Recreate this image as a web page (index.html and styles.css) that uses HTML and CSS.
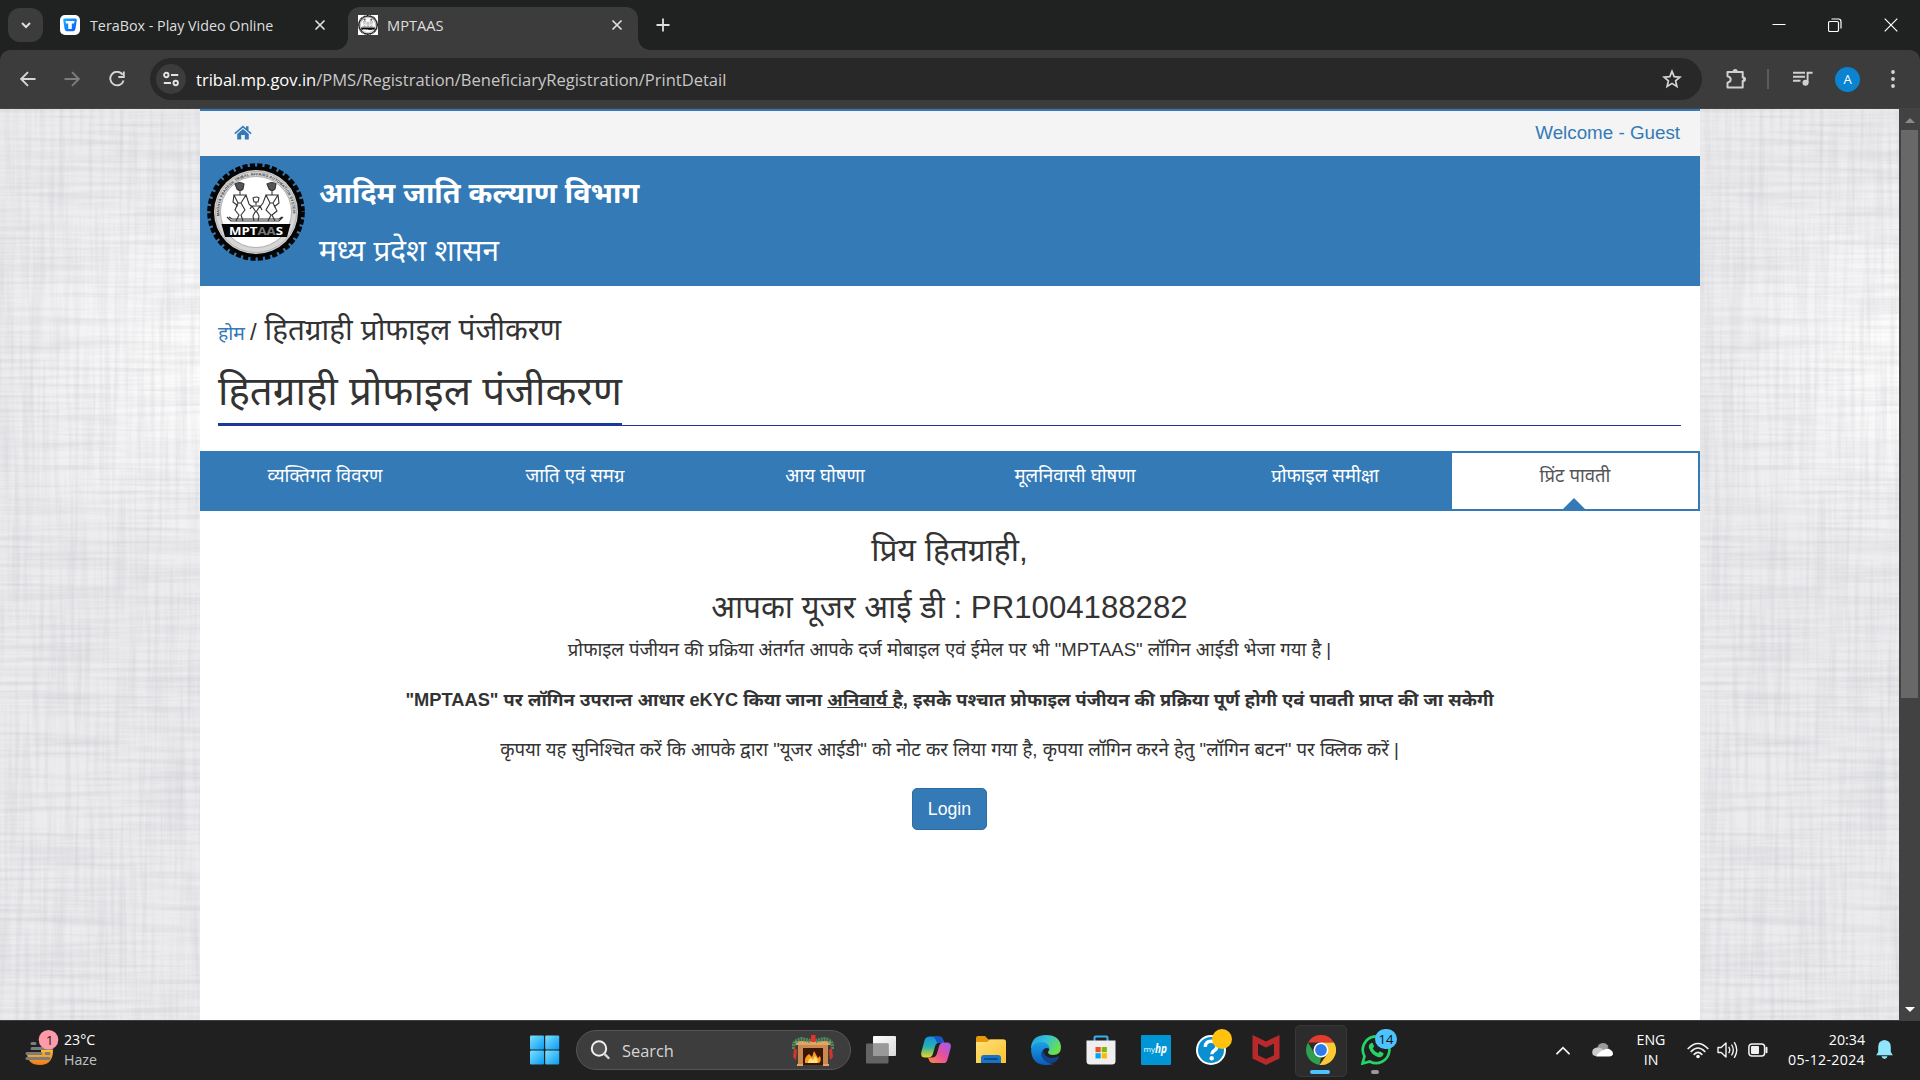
FILE: index.html
```html
<!DOCTYPE html>
<html lang="hi">
<head>
<meta charset="utf-8">
<title>MPTAAS</title>
<link rel="stylesheet" href="styles.css">
</head>
<body>
<svg class="defs" width="0" height="0" aria-hidden="true">
  <defs>
    <filter id="warp" x="0" y="0" width="100%" height="100%">
      <feTurbulence type="fractalNoise" baseFrequency="0.008 0.22" numOctaves="3" seed="4"/>
      <feColorMatrix values="0 0 0 0 .45  0 0 0 0 .46  0 0 0 0 .48  .55 0 0 0 -.21"/>
    </filter>
    <filter id="weft" x="0" y="0" width="100%" height="100%">
      <feTurbulence type="fractalNoise" baseFrequency="0.2 0.008" numOctaves="3" seed="9"/>
      <feColorMatrix values="0 0 0 0 .45  0 0 0 0 .46  0 0 0 0 .48  .5 0 0 0 -.2"/>
    </filter>
    <radialGradient id="glow" gradientUnits="userSpaceOnUse" cx="215" cy="250" r="230">
      <stop offset="0" stop-color="#fff"/><stop offset="1" stop-color="#fff" stop-opacity="0"/>
    </radialGradient>
    <g id="linen">
      <rect width="200" height="911" fill="#ececef"/>
      <rect width="200" height="911" fill="url(#glow)"/>
      <rect width="200" height="911" filter="url(#warp)"/>
      <rect width="200" height="911" filter="url(#weft)"/>
    </g>
    <symbol id="seal" viewBox="0 0 98 98">
      <circle cx="49" cy="49" r="45.500" fill="#050505"/>
      <circle cx="49" cy="49" r="46.300" fill="none" stroke="#050505" stroke-width="5" stroke-dasharray="5.2 2.1"/>
      <circle cx="49" cy="49" r="42" fill="#d6d6d6"/>
      <circle cx="49" cy="49" r="40.600" fill="none" stroke="#999" stroke-width=".6"/>
      <circle cx="49" cy="49" r="35.500" fill="#fff" stroke="#888" stroke-width=".6"/>
      <path id="ring" d="M12.500 53A36.700 36.700 0 1 1 85.500 53" fill="none"/>
      <text font-family="Liberation Sans" font-size="3.800" font-weight="700" fill="#444"><textPath href="#ring" textLength="120">MADHYA PRADESH TRIBAL AFFAIRS AUTOMATION SYSTEM</textPath></text>
      <g fill="none" stroke="#333" stroke-width="1.100">
        <path d="M28 21q5-3 9 0l-1 5q-3 3-6 0z" fill="#555"/><path d="M33 28v4M27 32h12l-5 8h-3zM27 32l-1 7 5 4M39 32l3 9 3 3M31 40l-3 7 4 5-3 6M34 40l4 7-4 5 2 6"/>
        <path d="M60 21q5-3 9 0l-1 5q-3 3-6 0z" fill="#555"/><path d="M65 28v4M59 32h12l-5 8h-3zM59 32l-3 8-3 4M71 32l1 8-5 4M63 40l-4 7 5 5-3 6M66 40l4 8-5 4 3 6"/>
        <path d="M46 35q4-2 6 0l-1 4h-4zM49 39v3M45 43h8l-4 6zM45 43l-2 3M53 43l2 4M48 49l-2 4 1 5M50 49l2 4-1 5"/>
        <path d="M20 54l4 4h48l4-4M22 54l3 2h47l3-2"/>
      </g>
      <path d="M14.500 61h69l-3.500 13h-62z" fill="#050505"/>
      <text x="22" y="72" font-family="Open Sans" font-weight="700" font-size="11" fill="#fff" textLength="54" lengthAdjust="spacingAndGlyphs">MPT<tspan fill="#777">AA</tspan>S</text>
    </symbol>
    <linearGradient id="win" x1="0" y1="0" x2="1" y2="1"><stop stop-color="#7be0fc"/><stop offset="1" stop-color="#0a9bf5"/></linearGradient>
    <linearGradient id="cpA" x1="0" y1="0" x2="0" y2="1"><stop stop-color="#1690e8"/><stop offset=".5" stop-color="#27b3a8"/><stop offset="1" stop-color="#f2d322"/></linearGradient>
    <linearGradient id="cpB" x1="1" y1="0" x2="0" y2="1"><stop stop-color="#9b5cf0"/><stop offset=".5" stop-color="#e8509b"/><stop offset="1" stop-color="#ff8a3c"/></linearGradient>
    <linearGradient id="fold" x1="0" y1="0" x2="1" y2="1"><stop stop-color="#ffe07a"/><stop offset="1" stop-color="#fbc22d"/></linearGradient>
    <linearGradient id="edgeA" x1="0" y1="0" x2="1" y2=".5"><stop stop-color="#1f9de0"/><stop offset=".5" stop-color="#35c1d5"/><stop offset="1" stop-color="#6be04d"/></linearGradient>
    <linearGradient id="edgeB" x1="0" y1="0" x2="0" y2="1"><stop stop-color="#1aa1e8"/><stop offset="1" stop-color="#0a5cb8"/></linearGradient>
    <linearGradient id="sun" x1="0" y1="0" x2="0" y2="1"><stop stop-color="#fbbd2c"/><stop offset="1" stop-color="#f07a1c"/></linearGradient>
    <linearGradient id="tv" x1="0" y1="0" x2="1" y2="1"><stop stop-color="#fff"/><stop offset="1" stop-color="#d8d8d8"/></linearGradient>
    <linearGradient id="tera" x1="0" y1="0" x2="1" y2="1"><stop stop-color="#18b4ff"/><stop offset="1" stop-color="#0a55ff"/></linearGradient>
  </defs>
</svg>

<div class="screen">
  <header class="tabstrip">
    <button class="tab-search"><svg width="12" height="12" viewBox="0 0 12 12"><path d="M2 4l4 4 4-4" fill="none" stroke="#dedede" stroke-width="2"/></svg></button>
    <div class="tab">
      <svg width="20" height="20" viewBox="0 0 20 20"><rect width="20" height="20" rx="5" fill="#fff"/><path d="M4.500 3.500h11q1.500 0 1.300 1.500l-1.400 9q-.2 2-2.200 2.200H6.800q-2-.2-2.200-2.200L3.200 5q-.2-1.500 1.300-1.500z" fill="url(#tera)"/><path d="M5.500 6h9l-.5 2.500h-2.200V14H8.200V8.500H6z" fill="#fff"/></svg>
      <span class="tab-title t">TeraBox - Play Video Online</span>
      <svg class="x" width="12" height="12" viewBox="0 0 12 12"><path d="M1.500 1.500l9 9M10.500 1.500l-9 9"/></svg>
    </div>
    <div class="tab active">
      <svg width="20" height="20" viewBox="0 0 98 98"><rect width="98" height="98" fill="#fff"/><use href="#seal" width="98" height="98"/></svg>
      <span class="tab-title t">MPTAAS</span>
      <svg class="x" width="12" height="12" viewBox="0 0 12 12"><path d="M1.500 1.500l9 9M10.500 1.500l-9 9"/></svg>
    </div>
    <svg class="plus" width="14" height="14" viewBox="0 0 14 14"><path d="M7 .5v13M.5 7h13" stroke="#dedede" stroke-width="1.800"/></svg>
    <div class="win-controls">
      <svg width="14" height="14" viewBox="0 0 14 14"><path d="M.5 6.500h13" stroke="#fff" stroke-width="1"/></svg>
      <svg width="14" height="14" viewBox="0 0 14 14"><rect x=".5" y="3.500" width="10" height="10" rx="1.500" fill="none" stroke="#fff" stroke-width="1.200"/><path d="M3.500 1h7q2.500 0 2.500 2.500v7" fill="none" stroke="#fff" stroke-width="1.200"/></svg>
      <svg width="14" height="14" viewBox="0 0 14 14"><path d="M.7.7l12.600 12.600M13.300.7L.7 13.300" stroke="#fff" stroke-width="1.200"/></svg>
    </div>
  </header>

  <div class="toolbar-back">
  <div class="toolbar">
    <svg class="nav-ic" width="16" height="16" viewBox="0 0 16 16"><path d="M15.500 8H1.500M8 1.200L1.200 8 8 14.800" fill="none" stroke="#d5d5d5" stroke-width="1.900"/></svg>
    <svg class="nav-ic" width="16" height="16" viewBox="0 0 16 16"><path d="M.5 8h14M8 1.200L14.800 8 8 14.800" fill="none" stroke="#7d7d7d" stroke-width="1.900"/></svg>
    <svg class="nav-ic reload" width="16" height="16" viewBox="0 0 16 16"><path d="M13.600 3.600A6.800 6.800 0 1 0 14.600 9.500M14.800.5v5.500H9.300" fill="none" stroke="#d5d5d5" stroke-width="1.900"/></svg>
    <div class="omnibox">
      <span class="site"><svg width="16" height="16" viewBox="0 0 16 16"><g fill="none" stroke="#e3e3e3" stroke-width="1.900"><circle cx="3.300" cy="4" r="2.200"/><path d="M8 4h7.200M.8 12H8"/><circle cx="12.700" cy="12" r="2.200"/></g></svg></span>
      <span class="t url"><b>tribal.mp.gov.in</b>/PMS/Registration/BeneficiaryRegistration/PrintDetail</span>
      <svg class="star" width="20" height="20" viewBox="0 0 20 20"><path d="M10 2.300l2.200 5.300 5.700.5-4.300 3.700 1.300 5.600-4.900-3-4.900 3 1.300-5.600L2.100 8.100l5.700-.5z" fill="none" stroke="#d5d5d5" stroke-width="1.700"/></svg>
    </div>
    <svg class="puzzle" width="22" height="22" viewBox="0 0 22 22"><path d="M2.500 4h15.200v5.500q1.800.2 1.800 1.800t-1.800 1.700v6.500H2.500v-4.800q3.200-.8 3.200-3.200T2.500 8.300z" fill="none" stroke="#d0d0d0" stroke-width="2" stroke-linejoin="round"/><path d="M7.500 4q.2-3 2.700-3t2.700 3zM18 8.500q3 .2 3 2.800t-3 2.700z" fill="#d0d0d0"/></svg>
    <i class="divider"></i>
    <svg class="music" width="20" height="16" viewBox="0 0 20 16"><path d="M0 1.800h12M0 5.800h12M0 9.800h7.500" stroke="#d0d0d0" stroke-width="1.900"/><circle cx="12.500" cy="11.800" r="3" fill="#d0d0d0"/><path d="M14.600 12V1.800h5" fill="none" stroke="#d0d0d0" stroke-width="1.900"/></svg>
    <span class="avatar">A</span>
    <svg class="dots" width="4" height="18" viewBox="0 0 4 18"><g fill="#d5d5d5"><circle cx="2" cy="2" r="1.900"/><circle cx="2" cy="9" r="1.900"/><circle cx="2" cy="16" r="1.900"/></g></svg>
  </div>
  </div>

  <div class="viewport">
    <svg class="gutter" width="200" height="911"><use href="#linen"/></svg>
    <main class="page">
      <div class="topbar">
        <svg width="18" height="15" viewBox="0 0 18 15"><path d="M9 .5l3 2.700V1.200h2.500v4.200L17.700 8l-1 1.200L9 2.700 1.300 9.200.3 8z" fill="#337ab7"/><path d="M9 4l5.800 4.900v5.600h-4V10H7.200v4.500h-4V8.900z" fill="#337ab7"/></svg>
        <span class="t">Welcome - Guest</span>
      </div>
      <div class="banner">
        <svg width="98" height="98"><use href="#seal" width="98" height="98"/></svg>
        <div class="names">
          <div class="dept t">आदिम जाति कल्याण विभाग</div>
          <div class="govt t">मध्य प्रदेश शासन</div>
        </div>
      </div>
      <div class="crumbs t"><span class="home">होम</span><span class="slash">/</span><span>हितग्राही प्रोफाइल पंजीकरण</span></div>
      <div class="title"><h1 class="t">हितग्राही प्रोफाइल पंजीकरण</h1></div>
      <nav class="steps">
        <div>व्यक्तिगत विवरण</div>
        <div>जाति एवं समग्र</div>
        <div>आय घोषणा</div>
        <div>मूलनिवासी घोषणा</div>
        <div>प्रोफाइल समीक्षा</div>
        <div class="current">प्रिंट पावती</div>
      </nav>
      <section class="message">
        <div class="dear">प्रिय हितग्राही,</div>
        <div class="uid">आपका यूजर आई डी : PR1004188282</div>
        <div class="p1">प्रोफाइल पंजीयन की प्रक्रिया अंतर्गत आपके दर्ज मोबाइल एवं ईमेल पर भी "MPTAAS" लॉगिन आईडी भेजा गया है |</div>
        <div class="p2">"MPTAAS" पर लॉगिन उपरान्त आधार eKYC किया जाना <u>अनिवार्य है</u>, इसके पश्चात प्रोफाइल पंजीयन की प्रक्रिया पूर्ण होगी एवं पावती प्राप्त की जा सकेगी</div>
        <div class="p3">कृपया यह सुनिश्चित करें कि आपके द्वारा "यूजर आईडी" को नोट कर लिया गया है, कृपया लॉगिन करने हेतु "लॉगिन बटन" पर क्लिक करें |</div>
        <button class="login">Login</button>
      </section>
    </main>
    <svg class="gutter" width="199" height="911"><use href="#linen"/></svg>
    <div class="scrollbar"><i class="up"></i><i class="thumb"></i><i class="down"></i></div>
  </div>

  <footer class="taskbar">
    <div class="weather">
      <svg width="34" height="38" viewBox="0 0 34 38"><path d="M2 22h14v-2h12q0 15-13 15T2 22z" fill="url(#sun)"/><g stroke="#7a7d80" stroke-width="3" stroke-linecap="round"><path d="M7 13.500h3M7 18.500h20M2 23.500h14M21 23.500h3M2 28.500h22"/></g><circle cx="23.500" cy="9.800" r="9.800" fill="#ff9aa8"/><text x="24.500" y="14.800" text-anchor="middle" font-family="Open Sans" font-size="13.500" fill="#1b1b1b">1</text></svg>
      <div class="temps"><span>23°C</span><span class="dim">Haze</span></div>
    </div>
    <div class="apps">
      <div class="slot"><svg width="30" height="30" viewBox="0 0 30 30"><g fill="url(#win)"><rect x="0" y=".5" width="14" height="14" rx="1"/><rect x="15.200" y=".5" width="14" height="14" rx="1"/><rect x="0" y="15.500" width="14" height="14" rx="1"/><rect x="15.200" y="15.500" width="14" height="14" rx="1"/></g></svg></div>
      <div class="search">
        <svg width="20" height="20" viewBox="0 0 20 20"><circle cx="9" cy="8.500" r="7.200" fill="#555" stroke="#f0f0f0" stroke-width="2"/><path d="M14.200 13.700l4.300 4.300" stroke="#d8d8d8" stroke-width="2.400" stroke-linecap="round"/></svg>
        <span>Search</span>
        <svg width="42" height="32" viewBox="0 0 42 32"><rect x="6" y="8" width="30" height="23" fill="#c98a4f"/><rect x="3" y="7" width="36" height="4" rx="1" fill="#e0a566"/><rect x="11" y="14" width="20" height="17" fill="#3a1608"/><path d="M13 29q-1-6 4-9l3 3 2-6 4 7 2-2q2 5-1 7z" fill="#f79a1d"/><path d="M16 29q0-4 3-5l2 2 2-4q4 4 2 7z" fill="#ffe27a"/><path d="M1 15q0-9 9-10l9 2M41 15q0-9-9-10l-9 2" fill="none" stroke="#4d8a5a" stroke-width="4" stroke-dasharray="2 .7"/><rect x="19" y="1" width="4.500" height="7" fill="#e2322b"/><path d="M2 14l3 2-1 10-3-3zM40 14l-3 2 1 10 3-3z" fill="#d3352d"/><path d="M5 31h6M31 31h6" stroke="#e0a566" stroke-width="2"/></svg>
      </div>
      <div class="slot"><svg width="30" height="30" viewBox="0 0 30 30"><rect x="7" y="1" width="23" height="20" rx="1" fill="url(#tv)"/><rect x="0" y="8.500" width="22.500" height="20" rx="1" fill="#6c6c6c" fill-opacity=".88"/><path d="M7 8.500h15.500V21H7z" fill="#999"/></svg></div>
      <div class="slot"><svg width="30" height="30" viewBox="0 0 30 30"><path d="M6 1.500h12q3 0 4 3l1 3h-4q-4 0-5 4l-2 7q-1 4-5 4H4q-5 0-3.500-6l3-11q1-4 5.500-4z" fill="url(#cpA)"/><path d="M12 1.500h6q3 0 4 3l1 3.500h-5q-3 0-3-3z" fill="#1557c9"/><path d="M24 28H12q-3 0-4-3l-1-2.500h4q4 0 5-4l2-7q1-4 5-4h3q5 0 3.500 6l-3 11q-1 4-5 4z" fill="url(#cpB)"/></svg></div>
      <div class="slot"><svg width="30" height="28" viewBox="0 0 30 28"><path d="M0 2q0-2 2-2h7l3.500 3.500H28v8H0z" fill="#e29a0c"/><path d="M0 6h11l3-2.500h14q2 0 2 2V27H0z" fill="url(#fold)"/><path d="M5 27v-5q0-3 3-3h14q3 0 3 3v5z" fill="#1374c9"/><path d="M9 23h12" stroke="#0a4a8c" stroke-width="2" stroke-linecap="round"/></svg></div>
      <div class="slot"><svg width="30" height="30" viewBox="0 0 30 30"><path d="M0 14Q0 0 15 0q14 0 15 12 0 8-8 8-5 0-5-3 2-2 1-4-1-3-5-4Q4 8 0 14z" fill="url(#edgeA)"/><path d="M0 15Q2 7 10 7q8 0 8.500 7-3-2-5.500 0Q10 17 12 22q3 7 11 7-4 1-8 1Q1 30 0 15z" fill="url(#edgeB)"/><path d="M13 14q-5 4-1 10 5 6 12 3 3-2 4-5 0-1-1-.5-7 3-12-.5-4-4-2-7z" fill="#12438f"/></svg></div>
      <div class="slot"><svg width="30" height="30" viewBox="0 0 30 30"><path d="M8.500 6V2.500q0-1 1-1h11q1 0 1 1V6" fill="none" stroke="#36b0ee" stroke-width="2"/><path d="M.5 5.500h29V26q0 3.500-3.500 3.500H4Q.5 29.500.5 26z" fill="#efefef"/><path d="M9.500 12h5.200v5.200H9.500z" fill="#f25022"/><path d="M15.700 12h5.200v5.200h-5.200z" fill="#7fba00"/><path d="M9.500 18.200h5.200v5.200H9.500z" fill="#00a4ef"/><path d="M15.700 18.200h5.200v5.200h-5.200z" fill="#ffb900"/></svg></div>
      <div class="slot"><svg width="30" height="30" viewBox="0 0 30 30"><rect width="30" height="30" rx="1" fill="#0096d6"/><text x="2.500" y="17" font-family="Open Sans" font-size="8" fill="#fff" textLength="11.500" lengthAdjust="spacingAndGlyphs">my</text><text x="14" y="18" font-family="Open Sans" font-size="12" font-weight="700" font-style="italic" fill="#fff" textLength="12" lengthAdjust="spacingAndGlyphs">hp</text></svg></div>
      <div class="slot"><svg width="30" height="30" viewBox="0 0 30 30"><circle cx="15" cy="15" r="15" fill="#fff"/><circle cx="15" cy="15" r="13" fill="#0a8fd0"/><path d="M9.300 12Q9.300 6.300 15 6.300q5.900 0 5.900 4.900 0 2.800-2.900 4.600-2.200 1.400-2.200 3.400" fill="none" stroke="#fff" stroke-width="3.400"/><circle cx="15.700" cy="23.300" r="2.200" fill="#fff"/></svg><i class="dot"></i></div>
      <div class="slot"><svg width="28" height="30" viewBox="0 0 28 30"><path d="M.5 0L14 6.500 27.500 0v23.500L14 30 .5 23.500z" fill="#b9292b"/><path d="M6 8.500l8 4 8-4v11.800L14 24l-8-3.700z" fill="#202020"/></svg></div>
      <div class="slot running"><svg width="30" height="30" viewBox="0 0 30 30"><path d="M2 7.500A15 15 0 0 1 28 7.500H15z" fill="#e33b2e"/><path d="M2 7.500L8.500 18.700 15 22.500 13.500 29.900A15 15 0 0 1 2 7.500z" fill="#2f9e4f"/><path d="M28 7.500A15 15 0 0 1 13.500 29.900L21.500 18.700 15 7.500z" fill="#fcc934"/><circle cx="15" cy="15" r="7.500" fill="#fff"/><circle cx="15" cy="15" r="5.900" fill="#2f7bea"/></svg></div>
      <div class="slot idle"><svg width="30" height="30" viewBox="0 0 30 30"><path d="M1.500 28.500l2-7.200A13.300 13.300 0 1 1 8.800 26.500z" fill="none" stroke="#25d366" stroke-width="2.700"/><path d="M10.300 8q-3.300 1.500-2.300 5 2 6.500 9 9 4 1 5.500-2.800.3-.8-.4-1.300l-2.700-1.400q-.7-.3-1.200.3l-1.200 1.500q-3.500-1.500-5.300-4.800l1.100-1.600q.4-.5.100-1.100l-1.200-2.500q-.5-.8-1.400-.3z" fill="#25d366"/></svg><span class="badge">14</span></div>
    </div>
    <div class="tray">
      <svg class="chev" width="14" height="9" viewBox="0 0 14 9"><path d="M1 7.700L7 1.700l6 6" fill="none" stroke="#f2f2f2" stroke-width="1.800" stroke-linecap="round"/></svg>
      <svg class="cloud" width="21" height="14" viewBox="0 0 21 14"><path d="M5 6q1-6 6-6 4 0 5.500 4L10 9z" fill="#9a9a9a"/><path d="M4 13Q0 13 .2 9T5 4.500q5 0 8 3.500L8 13z" fill="#c9c9c9"/><path d="M4 13.500Q7 8 12 7q3-2.500 6-.5 3 1.300 3 4 0 3-4 3z" fill="#fff"/></svg>
      <div class="lang"><span>ENG</span><span>IN</span></div>
      <svg class="wifi" width="22" height="17" viewBox="0 0 22 17"><g fill="none" stroke="#f2f2f2" stroke-width="1.700" stroke-linecap="round"><path d="M1.200 6.500q9.800-10 19.600 0M4.200 9.500q6.800-7 13.600 0M7.200 12.300q3.800-4 7.600 0"/></g><circle cx="11" cy="14.500" r="1.800" fill="#f2f2f2"/></svg>
      <svg class="vol" width="21" height="18" viewBox="0 0 21 18"><path d="M1 6.500h3.200L9 2v14l-4.800-4.500H1z" fill="none" stroke="#f2f2f2" stroke-width="1.400" stroke-linejoin="round"/><g fill="none" stroke="#f2f2f2" stroke-width="1.400" stroke-linecap="round"><path d="M12 6.300q1.500 2.700 0 5.400M14.800 4q3 5 0 10M17.500 1.700q4.500 7.300 0 14.600"/></g></svg>
      <svg class="bat" width="20" height="14" viewBox="0 0 20 14"><rect x=".9" y=".9" width="15.700" height="12.200" rx="3" fill="none" stroke="#f2f2f2" stroke-width="1.500"/><rect x="3" y="3" width="8" height="8" rx="1" fill="#f2f2f2"/><path d="M18.500 4.800v4.400" stroke="#f2f2f2" stroke-width="2" stroke-linecap="round"/></svg>
      <div class="clock"><span>20:34</span><span class="date">05-12-2024</span></div>
      <svg class="bell" width="17" height="20" viewBox="0 0 17 20"><path d="M8.500 0q6.300.5 6.300 7v5l2 3.200H.2l2-3.200V7q0-6.500 6.300-7zM5.500 16.300h6q-.5 2.700-3 2.700t-3-2.700z" fill="#8fe6fb"/></svg>
    </div>
  </footer>
</div>
</body>
</html>
```
FILE: styles.css
```css
* { box-sizing: border-box; }
body { margin: 0; background: #202020; font-family: "Open Sans", "Noto Sans", sans-serif; overflow: hidden; }
.defs { display: block; width: 0; height: 0; overflow: hidden; }
svg { display: block; flex: none; }
.t { white-space: nowrap; }
.screen { width: 1920px; height: 1080px; display: flex; flex-direction: column; }

/* browser chrome */
.tabstrip { height: 50px; background: #202221; display: flex; align-items: center; color: #dedede; font-size: 14.3px; }
.tab-search { width: 35px; height: 34px; margin: 0 0 0 8px; padding: 0; border: 0; border-radius: 12px; background: #3c3c3c; display: grid; place-items: center; }
.tab { display: flex; align-items: center; width: 305px; height: 43px; padding-left: 17px; }
.tab .x { margin-right: 22px; stroke: #dedede; stroke-width: 1.7; }
.tab-title { flex: 1; margin-left: 10px; }
.tab.active { width: 290px; padding: 0 0 7px 10px; margin-top: 7px; background: #3c3c3c; border-radius: 12px 12px 0 0; position: relative; font-size: 14.6px; }
.tab.active .tab-title { margin-left: 9px; }
.tab.active .x { margin-right: 15px; }
.tab.active::before, .tab.active::after { content: ""; position: absolute; bottom: 0; width: 12px; height: 12px; }
.tab.active::before { left: -12px; background: radial-gradient(circle at 0 0, transparent 11.5px, #3c3c3c 12px); }
.tab.active::after { right: -12px; background: radial-gradient(circle at 100% 0, transparent 11.5px, #3c3c3c 12px); }
.plus { margin-left: 18px; }
.win-controls { margin-left: auto; display: flex; gap: 42px; padding-right: 22px; }
.toolbar-back { background: #202221; }
.toolbar { height: 59px; background: #3c3c3c; border-bottom: 1px solid #454343; border-radius: 10px 10px 0 0; display: flex; align-items: center; }
.nav-ic { margin-left: 28px; }
.nav-ic:first-child { margin-left: 20px; }
.reload { margin-left: 29px; }
.omnibox { width: 1552px; height: 42px; margin-left: 25px; padding: 0 20px 0 6px; border-radius: 21px; background: #282828; display: flex; align-items: center; }
.site { width: 30px; height: 30px; border-radius: 50%; background: #3c3c3c; display: grid; place-items: center; }
.url { margin-left: 10px; font-size: 16.55px; color: #c7c7c7; flex: none; }
.url b { font-weight: 400; color: #fff; }
.star { margin-left: auto; }
.puzzle { margin-left: 23px; }
.divider { width: 2px; height: 20px; background: #5c5c5c; margin-left: 20px; }
.music { margin-left: 24px; }
.avatar { width: 25px; height: 25px; margin-left: 22px; border-radius: 50%; background: #0a84d0; color: #fff; font-size: 13px; line-height: 25px; text-align: center; }
.dots { margin-left: 31px; }

/* web page */
.viewport { height: 911px; display: flex; }
.page { width: 1500px; height: 911px; background: #fff; border-top: 2px solid #337ab7; color: #333; font-family: "Liberation Sans", "Noto Sans", sans-serif; }
.topbar { height: 45px; background: #f4f4f4; display: flex; align-items: center; justify-content: space-between; padding: 0 20px 2px 34px; color: #337ab7; font-size: 18.8px; }
.banner { height: 130px; background: #337ab7; color: #fff; display: flex; padding: 7px 7px 0; gap: 14px; }
.dept { height: 58px; line-height: 60px; font-size: 28.75px; font-weight: 700; }
.govt { height: 58px; line-height: 60px; font-size: 29.7px; }
.crumbs { display: flex; align-items: baseline; height: 80px; line-height: 87px; padding-left: 18px; font-size: 29.6px; }
.home { font-size: 19.4px; color: #337ab7; }
.slash { margin: 0 8px 0 5px; font-size: 24px; }
.title { margin: 0 19px 25px 18px; height: 60px; border-bottom: 1px solid #1a3a9a; display: flex; }
.title h1 { margin: 0; height: 60px; line-height: 52px; font-size: 40.3px; font-weight: 400; border-bottom: 3px solid #1a3a9a; }
.steps { height: 60px; background: #337ab7; display: grid; grid-template-columns: repeat(6, 1fr); color: #fff; font-size: 18.55px; line-height: 50px; text-align: center; }
.steps .current { background: #fff; color: #555; border: 2px solid #337ab7; line-height: 46px; position: relative; }
.current::after { content: ""; position: absolute; left: 50%; bottom: 0; margin-left: -12px; border: 11px solid transparent; border-top: 0; border-bottom-color: #337ab7; }
.message { text-align: center; padding-right: 1px; }
.dear, .uid { height: 58px; line-height: 78px; font-size: 31.7px; }
.uid { font-size: 31.2px; }
.p1, .p2, .p3 { height: 50px; line-height: 45px; font-size: 18.53px; }
.p2 { font-weight: 700; font-size: 18.27px; }
.p3 { font-size: 18.63px; }
.login { width: 75px; height: 42px; margin: 11px 0 0; border: 1px solid #2e6da4; border-radius: 5px; background: #337ab7; color: #fff; font: 17.7px "Liberation Sans", sans-serif; padding: 0; }
.scrollbar { width: 21px; background: #424242; display: flex; flex-direction: column; align-items: center; }
.up { border: 5px solid transparent; border-top: 0; border-bottom-color: #8a8a8a; margin-top: 9px; }
.thumb { width: 17px; height: 568px; margin-top: 7px; background: #686868; }
.down { border: 5px solid transparent; border-bottom: 0; border-top-color: #fff; margin-top: auto; margin-bottom: 8px; }

/* taskbar */
.taskbar { height: 60px; background: #202020; border-top: 1px solid #3c3f3f; padding-bottom: 1px; display: flex; align-items: center; color: #fff; font-size: 14.2px; }
.weather { width: 517px; display: flex; gap: 5px; padding-left: 25px; }
.temps, .lang, .clock { display: flex; flex-direction: column; line-height: 20px; }
.dim { color: #c0c0c0; }
.apps { display: flex; align-items: center; }
.slot { width: 55px; height: 58px; display: grid; place-items: center; position: relative; }
.search { width: 275px; height: 40px; margin: 0 2px 0 4px; padding: 0 16px 0 13px; border: 1px solid #555; border-radius: 20px; background: #3d3d3d; display: flex; align-items: center; gap: 12px; font-size: 16.4px; color: #d5d5d5; }
.search svg:last-child { margin-left: auto; }
.dot { position: absolute; left: 29px; top: 8px; width: 20px; height: 20px; border-radius: 50%; background: #ffc20e; }
.badge { position: absolute; left: 27px; top: 8px; width: 22px; height: 20px; border-radius: 10px; background: #4cc2ff; color: #111; font-size: 13px; line-height: 20px; text-align: center; }
.running > svg, .dot { z-index: 1; }
.running::before { content: ""; position: absolute; left: 2px; top: 4px; width: 50px; height: 50px; border: 1px solid #383838; border-radius: 5px; background: #2c2c2c; }
.running::after { content: ""; position: absolute; left: 17px; top: 49px; width: 20px; height: 4px; border-radius: 2px; background: #4cc2ff; }
.idle::after { content: ""; position: absolute; left: 23px; top: 49px; width: 8px; height: 4px; border-radius: 2px; background: #999; }
.tray { flex: 1; display: flex; align-items: center; margin-left: 153px; }
.cloud { margin-left: 22px; }
.lang { width: 30px; margin-left: 23px; align-items: center; }
.wifi { margin-left: 21px; }
.vol { margin-left: 8px; }
.bat { margin-left: 10px; }
.clock { margin-left: auto; align-items: flex-end; }
.date { letter-spacing: .3px; }
.bell { margin: 0 27px 0 11px; }
```
